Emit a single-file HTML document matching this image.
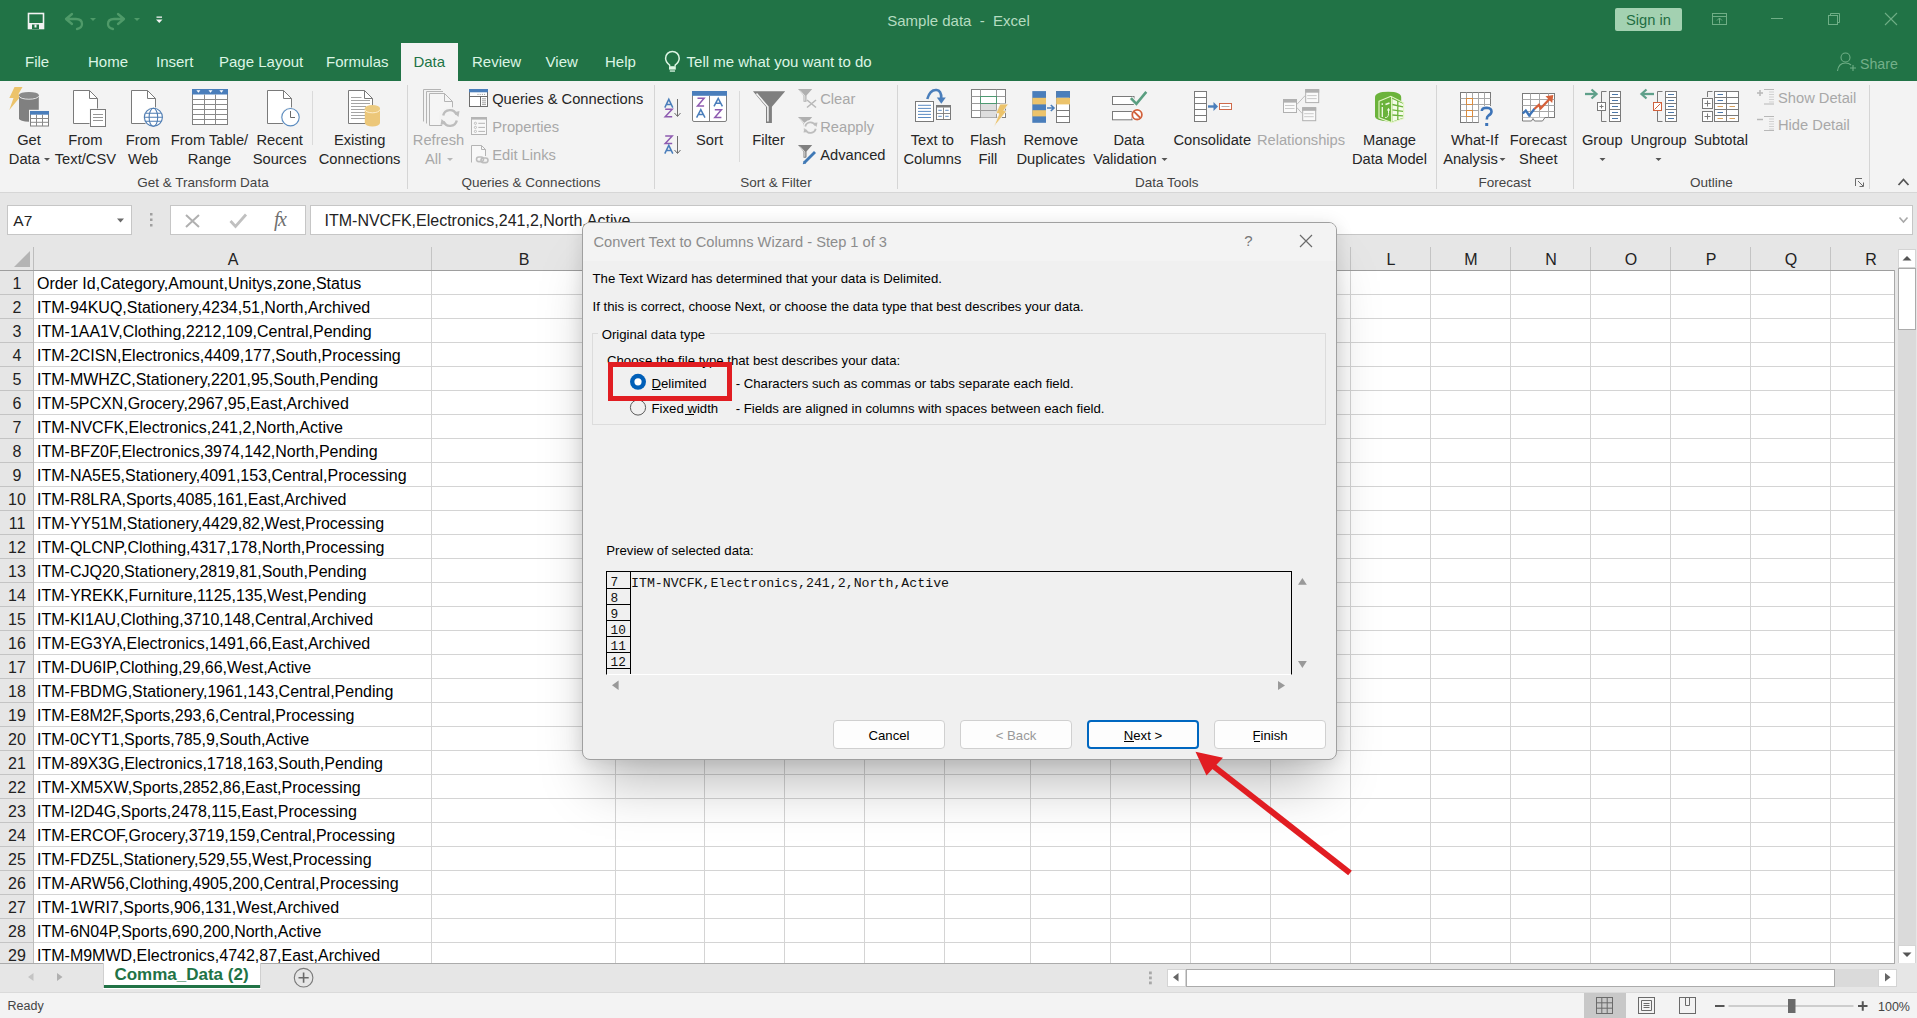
<!DOCTYPE html>
<html><head><meta charset="utf-8"><style>
html,body{margin:0;padding:0;}
body{width:1917px;height:1018px;position:relative;overflow:hidden;background:#ffffff;font-family:"Liberation Sans",sans-serif;}
.t{position:absolute;white-space:pre;line-height:1;}
.r{position:absolute;}
.s{position:absolute;overflow:visible;}
</style></head><body>
<div class="r" style="left:0px;top:0px;width:1917px;height:81px;background:#217346;"></div>
<div class="t" style="left:758.50px;width:400px;text-align:center;top:12.90px;font-size:15px;color:#b5dcc0;">Sample data  -  Excel</div>
<div class="r" style="left:1615px;top:8px;width:67px;height:23px;background:#a3d1b1;border-radius:2px"></div>
<div class="t" style="left:1615.00px;width:67px;text-align:center;top:13.06px;font-size:14.7px;color:#1f6e43;">Sign in</div>
<div class="r" style="left:401px;top:43px;width:57px;height:38px;background:#f3f3f3;"></div>
<div class="t" style="left:25.00px;top:54.30px;font-size:15px;color:#dcf5e4;">File</div>
<div class="t" style="left:88.00px;top:54.30px;font-size:15px;color:#dcf5e4;">Home</div>
<div class="t" style="left:156.00px;top:54.30px;font-size:15px;color:#dcf5e4;">Insert</div>
<div class="t" style="left:219.00px;top:54.30px;font-size:15px;color:#dcf5e4;">Page Layout</div>
<div class="t" style="left:326.00px;top:54.30px;font-size:15px;color:#dcf5e4;">Formulas</div>
<div class="t" style="left:413.40px;top:54.30px;font-size:15px;color:#217346;">Data</div>
<div class="t" style="left:472.00px;top:54.30px;font-size:15px;color:#dcf5e4;">Review</div>
<div class="t" style="left:545.60px;top:54.30px;font-size:15px;color:#dcf5e4;">View</div>
<div class="t" style="left:605.00px;top:54.30px;font-size:15px;color:#dcf5e4;">Help</div>
<div class="t" style="left:686.60px;top:54.30px;font-size:15px;color:#dcf5e4;">Tell me what you want to do</div>
<div class="t" style="left:1860.00px;top:56.68px;font-size:14.2px;color:#74b08a;">Share</div>
<div class="r" style="left:0px;top:81px;width:1917px;height:111px;background:#f3f3f3;"></div>
<div class="r" style="left:0px;top:192px;width:1917px;height:1px;background:#d6d6d6;"></div>
<div class="t" style="left:-51.00px;width:160px;text-align:center;top:132.76px;font-size:14.7px;color:#262626;">Get</div>
<div class="t" style="left:8.80px;top:152.46px;font-size:14.7px;color:#262626;">Data</div>
<div class="t" style="left:5.40px;width:160px;text-align:center;top:132.76px;font-size:14.7px;color:#262626;">From</div><div class="t" style="left:5.40px;width:160px;text-align:center;top:152.46px;font-size:14.7px;color:#262626;">Text/CSV</div>
<div class="t" style="left:63.00px;width:160px;text-align:center;top:132.76px;font-size:14.7px;color:#262626;">From</div><div class="t" style="left:63.00px;width:160px;text-align:center;top:152.46px;font-size:14.7px;color:#262626;">Web</div>
<div class="t" style="left:129.50px;width:160px;text-align:center;top:132.76px;font-size:14.7px;color:#262626;">From Table/</div><div class="t" style="left:129.50px;width:160px;text-align:center;top:152.46px;font-size:14.7px;color:#262626;">Range</div>
<div class="t" style="left:199.70px;width:160px;text-align:center;top:132.76px;font-size:14.7px;color:#262626;">Recent</div><div class="t" style="left:199.70px;width:160px;text-align:center;top:152.46px;font-size:14.7px;color:#262626;">Sources</div>
<div class="t" style="left:279.60px;width:160px;text-align:center;top:132.76px;font-size:14.7px;color:#262626;">Existing</div><div class="t" style="left:279.60px;width:160px;text-align:center;top:152.46px;font-size:14.7px;color:#262626;">Connections</div>
<div class="t" style="left:358.50px;width:160px;text-align:center;top:132.76px;font-size:14.7px;color:#a8a8a8;">Refresh</div>
<div class="t" style="left:425.00px;top:152.46px;font-size:14.7px;color:#a8a8a8;">All</div>
<div class="t" style="left:492.20px;top:91.96px;font-size:14.7px;color:#262626;">Queries &amp; Connections</div>
<div class="t" style="left:492.20px;top:119.76px;font-size:14.7px;color:#a8a8a8;">Properties</div>
<div class="t" style="left:492.20px;top:147.56px;font-size:14.7px;color:#a8a8a8;">Edit Links</div>
<div class="t" style="left:629.50px;width:160px;text-align:center;top:132.76px;font-size:14.7px;color:#262626;">Sort</div>
<div class="t" style="left:688.50px;width:160px;text-align:center;top:132.76px;font-size:14.7px;color:#262626;">Filter</div>
<div class="t" style="left:820.20px;top:92.06px;font-size:14.7px;color:#a8a8a8;">Clear</div>
<div class="t" style="left:820.20px;top:119.96px;font-size:14.7px;color:#a8a8a8;">Reapply</div>
<div class="t" style="left:820.20px;top:147.86px;font-size:14.7px;color:#262626;">Advanced</div>
<div class="t" style="left:852.40px;width:160px;text-align:center;top:132.76px;font-size:14.7px;color:#262626;">Text to</div><div class="t" style="left:852.40px;width:160px;text-align:center;top:152.46px;font-size:14.7px;color:#262626;">Columns</div>
<div class="t" style="left:908.00px;width:160px;text-align:center;top:132.76px;font-size:14.7px;color:#262626;">Flash</div><div class="t" style="left:908.00px;width:160px;text-align:center;top:152.46px;font-size:14.7px;color:#262626;">Fill</div>
<div class="t" style="left:970.80px;width:160px;text-align:center;top:132.76px;font-size:14.7px;color:#262626;">Remove</div><div class="t" style="left:970.80px;width:160px;text-align:center;top:152.46px;font-size:14.7px;color:#262626;">Duplicates</div>
<div class="t" style="left:1049.00px;width:160px;text-align:center;top:132.76px;font-size:14.7px;color:#262626;">Data</div><div class="t" style="left:1049.00px;width:160px;text-align:center;top:152.46px;font-size:14.7px;color:#262626;">Validation  </div>
<div class="t" style="left:1132.30px;width:160px;text-align:center;top:132.76px;font-size:14.7px;color:#262626;">Consolidate</div>
<div class="t" style="left:1221.00px;width:160px;text-align:center;top:132.76px;font-size:14.7px;color:#a8a8a8;">Relationships</div>
<div class="t" style="left:1309.50px;width:160px;text-align:center;top:132.76px;font-size:14.7px;color:#262626;">Manage</div><div class="t" style="left:1309.50px;width:160px;text-align:center;top:152.46px;font-size:14.7px;color:#262626;">Data Model</div>
<div class="t" style="left:1394.60px;width:160px;text-align:center;top:132.76px;font-size:14.7px;color:#262626;">What-If</div><div class="t" style="left:1394.60px;width:160px;text-align:center;top:152.46px;font-size:14.7px;color:#262626;">Analysis  </div>
<div class="t" style="left:1458.30px;width:160px;text-align:center;top:132.76px;font-size:14.7px;color:#262626;">Forecast</div><div class="t" style="left:1458.30px;width:160px;text-align:center;top:152.46px;font-size:14.7px;color:#262626;">Sheet</div>
<div class="t" style="left:1522.30px;width:160px;text-align:center;top:132.76px;font-size:14.7px;color:#262626;">Group</div>
<div class="t" style="left:1578.60px;width:160px;text-align:center;top:132.76px;font-size:14.7px;color:#262626;">Ungroup</div>
<div class="t" style="left:1641.00px;width:160px;text-align:center;top:132.76px;font-size:14.7px;color:#262626;">Subtotal</div>
<div class="t" style="left:1778.00px;top:90.76px;font-size:14.7px;color:#a8a8a8;">Show Detail</div>
<div class="t" style="left:1778.00px;top:117.66px;font-size:14.7px;color:#a8a8a8;">Hide Detail</div>
<div class="t" style="left:103.00px;width:200px;text-align:center;top:175.77px;font-size:13.5px;color:#444444;">Get &amp; Transform Data</div>
<div class="t" style="left:431.00px;width:200px;text-align:center;top:175.77px;font-size:13.5px;color:#444444;">Queries &amp; Connections</div>
<div class="t" style="left:676.00px;width:200px;text-align:center;top:175.77px;font-size:13.5px;color:#444444;">Sort &amp; Filter</div>
<div class="t" style="left:1066.80px;width:200px;text-align:center;top:175.77px;font-size:13.5px;color:#444444;">Data Tools</div>
<div class="t" style="left:1404.70px;width:200px;text-align:center;top:175.77px;font-size:13.5px;color:#444444;">Forecast</div>
<div class="t" style="left:1611.30px;width:200px;text-align:center;top:175.77px;font-size:13.5px;color:#444444;">Outline</div>
<div class="r" style="left:407px;top:85px;width:1px;height:104px;background:#d5d5d5;"></div>
<div class="r" style="left:654px;top:85px;width:1px;height:104px;background:#d5d5d5;"></div>
<div class="r" style="left:897px;top:85px;width:1px;height:104px;background:#d5d5d5;"></div>
<div class="r" style="left:1436px;top:85px;width:1px;height:104px;background:#d5d5d5;"></div>
<div class="r" style="left:1573px;top:85px;width:1px;height:104px;background:#d5d5d5;"></div>
<div class="r" style="left:1869px;top:85px;width:1px;height:104px;background:#d5d5d5;"></div>
<div class="r" style="left:312px;top:91px;width:1px;height:54px;background:#dadada;"></div>
<div class="r" style="left:739px;top:91px;width:1px;height:71px;background:#dadada;"></div>
<div class="r" style="left:0px;top:193px;width:1917px;height:54px;background:#e6e6e6;"></div>
<div class="r" style="left:7px;top:205px;width:125px;height:30px;background:#ffffff;box-sizing:border-box;border:1px solid #c6c6c6"></div>
<div class="t" style="left:13.30px;top:213.38px;font-size:15.5px;color:#222;">A7</div>
<div class="r" style="left:170px;top:205px;width:136px;height:30px;background:#ffffff;box-sizing:border-box;border:1px solid #c6c6c6"></div>
<div class="r" style="left:310px;top:205px;width:1603px;height:30px;background:#ffffff;box-sizing:border-box;border:1px solid #c6c6c6"></div>
<div class="t" style="left:324.50px;top:213.16px;font-size:16px;color:#222;">ITM-NVCFK,Electronics,241,2,North,Active</div>
<svg class="s" style="left:0;top:0" width="1917" height="260" viewBox="0 0 1917 260"><rect x="28.5" y="13.5" width="15" height="15" fill="none" stroke="#f2f2f2" stroke-width="1.6"/>
<rect x="29" y="23" width="14" height="6" fill="#f2f2f2"/>
<rect x="32" y="24.5" width="7" height="4.5" fill="#217346"/><rect x="34.5" y="24.5" width="2" height="3" fill="#f2f2f2"/>
<path d="M66,19 L72,14 M66,19 L72,24 M66,19 L76,19 Q82,19 82,24 Q82,28 77,29" fill="none" stroke="#4f9a69" stroke-width="2.3" stroke-linecap="round" stroke-linejoin="round"/>
<polygon points="90,18 96,18 93,21" fill="#4f9a69"/>
<path d="M124,19 L118,14 M124,19 L118,24 M124,19 L114,19 Q108,19 108,24 Q108,28 113,29" fill="none" stroke="#4f9a69" stroke-width="2.3" stroke-linecap="round" stroke-linejoin="round"/>
<polygon points="134,18 140,18 137,21" fill="#4f9a69"/>
<rect x="156.5" y="16.5" width="5.5" height="1.3" fill="#f2f2f2"/><polygon points="156,19.5 162.5,19.5 159.25,23" fill="#f2f2f2"/>
<rect x="1712.5" y="13.5" width="14" height="11" fill="none" stroke="#6fae86" stroke-width="1"/><path d="M1713,16.5 H1726 M1719.5,23.5 V18 M1717,20.5 L1719.5,18 L1722,20.5" fill="none" stroke="#6fae86" stroke-width="1"/>
<rect x="1771" y="18" width="12" height="1" fill="#6fae86"/>
<rect x="1828.5" y="15.5" width="9" height="9" fill="none" stroke="#6fae86"/><path d="M1830.5,15.5 V13.5 H1839.5 V22.5 H1837.5" fill="none" stroke="#6fae86"/>
<path d="M1885,13 L1897,25 M1897,13 L1885,25" stroke="#6fae86" stroke-width="1.1"/>
<circle cx="1845.5" cy="57.5" r="4.5" fill="none" stroke="#6fae86" stroke-width="1.1"/><path d="M1837.5,71 Q1838.5,63 1845.5,63 Q1849,63 1851,65" fill="none" stroke="#6fae86" stroke-width="1.1"/><path d="M1850,68 H1856 M1853,65 V71" stroke="#6fae86" stroke-width="1.1"/>
<g transform="translate(0,1.2)"><path d="M669.6,65 V63.8 Q665.6,60.8 665.6,57 A6.8,6.8 0 0 1 679.2,57 Q679.2,60.8 675.2,63.8 V65" fill="none" stroke="#dcf5e4" stroke-width="1.5"/><rect x="669" y="65" width="6.8" height="3.4" fill="#dcf5e4"/><rect x="669.8" y="69.2" width="5.2" height="1.3" fill="#dcf5e4"/></g>
<polygon points="14.5,87 22.5,87 18.3,94.3 21.3,95.5 9.3,110 13.5,98 9.3,98" fill="#ecc36b"/>
<path d="M19,95 V118.5 A9.9,3.2 0 0 0 38.8,118.5 V95 Z" fill="#808080"/><ellipse cx="28.9" cy="95" rx="9.9" ry="3.1" fill="#8a8a8a"/><path d="M19.3,96.2 A9.6,3 0 0 0 38.5,96.2" fill="none" stroke="#f3f3f3" stroke-width="0.9"/>
<rect x="29" y="109.8" width="21" height="17.8" fill="#f3f3f3"/>
<rect x="30.5" y="111.5" width="18" height="14.5" fill="#fff" stroke="#7f7f7f" stroke-width="1"/><rect x="30" y="111" width="19" height="3.7" fill="#4a7ebb"/>
<path d="M36.5,114.5 V126 M42.5,114.5 V126 M30.5,118.5 H48.5 M30.5,122.3 H48.5" stroke="#8a8a8a" stroke-width="1"/>
<path d="M73.5,90.5 H89.5 L97.5,98.5 V123.5 H73.5 Z" fill="#fff" stroke="#7a7a7a"/><path d="M89.5,90.5 V98.5 H97.5" fill="none" stroke="#7a7a7a"/>
<rect x="89.5" y="108.5" width="17" height="18.5" fill="#f3f3f3"/><rect x="90.5" y="109.5" width="15" height="17" fill="#fff" stroke="#7a7a7a"/>
<path d="M93,114.5 H103 M93,117.5 H103 M93,120.5 H103" stroke="#8a8a8a" stroke-width="0.9"/>
<path d="M131.5,90.5 H147.5 L155.5,98.5 V123.5 H131.5 Z" fill="#fff" stroke="#7a7a7a"/><path d="M147.5,90.5 V98.5 H155.5" fill="none" stroke="#7a7a7a"/>
<circle cx="153.4" cy="117.3" r="10.3" fill="#f3f3f3"/><circle cx="153.4" cy="117.3" r="9" fill="#fff" stroke="#4f7db3" stroke-width="1.1"/><ellipse cx="153.4" cy="117.3" rx="4.3" ry="9" fill="none" stroke="#4f7db3" stroke-width="1.1"/><path d="M144.4,117.3 H162.4 M146,113.3 H160.8 M146,121.3 H160.8" stroke="#4f7db3" stroke-width="1.1"/>
<rect x="192.5" y="89.5" width="35" height="35" fill="#fff" stroke="#7f7f7f"/><rect x="192" y="89" width="36" height="5.5" fill="#4a7ebb"/>
<polygon points="196.4,90.3 200.4,90.3 198.4,92.8" fill="#fff"/><polygon points="208.5,90.3 212.5,90.3 210.5,92.8" fill="#fff"/><polygon points="219.4,90.3 223.4,90.3 221.4,92.8" fill="#fff"/>
<path d="M204.5,94.5 V124.5 M215.5,94.5 V124.5 M192.5,99.5 H227.5 M192.5,104.5 H227.5 M192.5,109.5 H227.5 M192.5,114.5 H227.5 M192.5,119.5 H227.5" stroke="#8a8a8a" stroke-width="1"/>
<path d="M267.5,90.5 H283.5 L291.5,98.5 V123.5 H267.5 Z" fill="#fff" stroke="#7a7a7a"/><path d="M283.5,90.5 V98.5 H291.5" fill="none" stroke="#7a7a7a"/>
<circle cx="290.5" cy="117.2" r="10" fill="#f3f3f3"/><circle cx="290.5" cy="117.2" r="8.7" fill="#fff" stroke="#5b8cc0" stroke-width="1.1"/><path d="M290.5,111 V117.5 H295" fill="none" stroke="#6a6a6a" stroke-width="1"/>
<path d="M348.5,90.5 H364.5 L372.5,98.5 V123.5 H348.5 Z" fill="#fff" stroke="#7a7a7a"/><path d="M364.5,90.5 V98.5 H372.5" fill="none" stroke="#7a7a7a"/>
<path d="M351,97.5 H361.5 M351,100.5 H370 M351,103.5 H370 M351,106.5 H366 M351,109.5 H366 M351,112.5 H366 M351,115.5 H366 M351,118.5 H366" stroke="#9a9a9a" stroke-width="0.9"/>
<path d="M364.8,108.4 V123 A7.6,3.4 0 0 0 380,123 V108.4 Z" fill="#ecc779"/><ellipse cx="372.4" cy="108.4" rx="7.6" ry="3.3" fill="#eccb80"/><path d="M365,109.6 A7.4,3.2 0 0 0 379.8,109.6" fill="none" stroke="#fff3d6" stroke-width="0.9"/>
<path d="M423.5,121.5 V89.5 H441" fill="none" stroke="#b4b4b4"/><path d="M426.5,123.5 V91.5 H443" fill="none" stroke="#b4b4b4"/>
<path d="M429.5,125.5 V93.5 H444.5 L452.5,101.5 V125.5 Z" fill="#f5f5f5" stroke="#b4b4b4"/><path d="M444.5,93.5 V101.5 H452.5" fill="none" stroke="#b4b4b4"/>
<circle cx="450" cy="118" r="11" fill="#f3f3f3"/>
<path d="M443.2,115.5 A7,7 0 0 1 456.5,114.5 M456.8,120.5 A7,7 0 0 1 443.5,121.5" fill="none" stroke="#bdbdbd" stroke-width="2.4"/><polygon points="453.5,112.5 459.5,111 458.5,117" fill="#bdbdbd"/><polygon points="446.5,123.5 440.5,125 441.5,119" fill="#bdbdbd"/>
<rect x="469.5" y="89.5" width="18" height="17" fill="#fff" stroke="#6d6d6d"/><rect x="469" y="89" width="19" height="3.3" fill="#4a7ebb"/>
<path d="M469.5,96.5 H487.5 M480.5,96.5 V106.5" stroke="#6d6d6d" stroke-width="1"/><path d="M482,98.8 H486 M482,100.8 H486 M482,102.8 H486 M482,104.6 H486" stroke="#8a8a8a" stroke-width="0.8"/>
<path d="M477.5,94.4 H486" stroke="#8a8a8a" stroke-width="0.9" stroke-dasharray="1 1.2"/>
<rect x="471.5" y="117.5" width="15" height="17" fill="#f8f8f8" stroke="#b4b4b4"/><rect x="471" y="117" width="16" height="2.6" fill="#b4b4b4"/>
<circle cx="475.4" cy="123.3" r="1.1" fill="none" stroke="#b4b4b4" stroke-width="0.8"/><circle cx="475.4" cy="127.4" r="1.1" fill="none" stroke="#b4b4b4" stroke-width="0.8"/><circle cx="475.4" cy="131.4" r="1.1" fill="none" stroke="#b4b4b4" stroke-width="0.8"/><path d="M478.3,123.3 H485 M478.3,127.4 H485 M478.3,131.4 H485" stroke="#b4b4b4" stroke-width="1"/>
<path d="M471.5,162.5 V145.5 H481.5 L485.5,149.5 V156" fill="#f8f8f8" stroke="#b4b4b4"/><path d="M481.5,145.5 V149.5 H485.5" fill="none" stroke="#b4b4b4"/>
<rect x="476.5" y="157" width="7" height="4.6" rx="2.3" fill="none" stroke="#bdbdbd" stroke-width="1.6"/><rect x="481" y="158" width="7" height="4.6" rx="2.3" fill="none" stroke="#bdbdbd" stroke-width="1.6"/>
<path d="M664.8,107.6 L668.8,99.3 L672.8,107.6 M666.4,104.446 H671.1999999999999" fill="none" stroke="#4a7ebb" stroke-width="1.5"/>
<path d="M665.2,109.2 H672.2 L665.2,116.7 H672.2" fill="none" stroke="#8e5bb0" stroke-width="1.5"/>
<path d="M677.5,99 V116 M674.5,113 L677.5,116.5 L680.5,113" fill="none" stroke="#6d6d6d" stroke-width="1"/>
<path d="M665.2,136 H672.2 L665.2,143.5 H672.2" fill="none" stroke="#8e5bb0" stroke-width="1.5"/>
<path d="M664.8,153.60000000000002 L668.8,145.3 L672.8,153.60000000000002 M666.4,150.44600000000003 H671.1999999999999" fill="none" stroke="#4a7ebb" stroke-width="1.5"/>
<path d="M677.5,136 V153 M674.5,150 L677.5,153.5 L680.5,150" fill="none" stroke="#6d6d6d" stroke-width="1"/>
<rect x="692.5" y="91.5" width="34" height="30" rx="1.5" fill="#fff" stroke="#7f7f7f"/><rect x="692" y="91" width="35" height="4.8" fill="#4a7ebb"/><path d="M709.5,95.8 V121.5" stroke="#7f7f7f"/>
<path d="M697.5,98.3 H704.1 L697.5,106.1 H704.1" fill="none" stroke="#8e5bb0" stroke-width="1.5"/>
<path d="M696.6,117.6 L700.8000000000001,109.6 L705.0,117.6 M698.28,114.55999999999999 H703.32" fill="none" stroke="#4a7ebb" stroke-width="1.5"/>
<path d="M714,106.3 L718.2,98.3 L722.4,106.3 M715.68,103.25999999999999 H720.72" fill="none" stroke="#4a7ebb" stroke-width="1.5"/>
<path d="M714.8,109.8 H721.4 L714.8,117.6 H721.4" fill="none" stroke="#8e5bb0" stroke-width="1.5"/>
<polygon points="753,91.2 785.2,91.2 771.9,106.8 771.9,122.9 766,122.9 766,106.8" fill="#7f7f7f"/><path d="M756.5,93.5 L767.9,106.8 V121.5" fill="none" stroke="#f3f3f3" stroke-width="1.6"/>
<polygon points="798,89 812.2,89 806.5,95.5 806.5,101.8 803.5,101.8 803.5,95.5" fill="#b0b0b0"/><path d="M799.8,90.4 L804.8,95.8 V100.8" fill="none" stroke="#f3f3f3" stroke-width="0.8"/><path d="M807,100 L816,107.5 M816,100 L807,107.5" stroke="#b8b8b8" stroke-width="1.6"/>
<polygon points="798,117 812.2,117 806.5,123.5 806.5,129.8 803.5,129.8 803.5,123.5" fill="#b0b0b0"/><path d="M799.8,118.4 L804.8,123.8 V128.8" fill="none" stroke="#f3f3f3" stroke-width="0.8"/>
<circle cx="810.5" cy="127.5" r="7.5" fill="#f3f3f3"/><path d="M805.3,126.5 A5.3,5.3 0 0 1 815.3,125.5 M815.7,128.8 A5.3,5.3 0 0 1 805.7,129.8" fill="none" stroke="#bdbdbd" stroke-width="1.8"/><polygon points="813,123 817.5,122.5 816.5,127" fill="#bdbdbd"/><polygon points="808,132 803.5,132.5 804.5,128" fill="#bdbdbd"/>
<polygon points="798,145 812.2,145 806.5,151.5 806.5,157.8 803.5,157.8 803.5,151.5" fill="#7f7f7f"/><path d="M799.8,146.4 L804.8,151.8 V156.8" fill="none" stroke="#f3f3f3" stroke-width="0.8"/>
<path d="M804.5,162.5 L815,152" stroke="#f3f3f3" stroke-width="4.5"/><path d="M804.5,162.5 L815,152" stroke="#3f78b5" stroke-width="2.8"/><polygon points="802.8,164.2 803.6,160.8 806.2,163.4" fill="#3f78b5"/>
<rect x="915.5" y="101.5" width="18" height="20" fill="#fff" stroke="#7a7a7a"/><path d="M918,105.3 H931 M918,108.4 H931 M918,111.4 H931 M918,114.4 H931 M918,117.5 H931" stroke="#4a7ebb" stroke-width="0.9"/>
<rect x="936.5" y="105.5" width="14" height="14" fill="#fff" stroke="#7a7a7a"/><rect x="936" y="105" width="15" height="2.5" fill="#7a7a7a"/><path d="M943.5,107.5 V119.5 M936.5,113.5 H950.5" stroke="#7a7a7a" stroke-width="0.9"/><path d="M938.3,110.3 H941.8 M945.2,110.3 H948.7 M938.3,116.3 H941.8 M945.2,116.3 H948.7" stroke="#4a7ebb" stroke-width="0.9"/>
<path d="M927.3,99 Q930,89.5 936.5,90 Q941.5,90.5 941.3,98.5" fill="none" stroke="#4a7ebb" stroke-width="2.6"/><polygon points="936.8,97.5 945.8,97.5 941.3,103.8" fill="#4a7ebb"/>
<rect x="971.5" y="89.5" width="34" height="28" fill="#fff" stroke="#7f7f7f"/><rect x="981" y="103.5" width="15.5" height="14" fill="#dedede"/>
<path d="M980.5,89.5 V117.5 M996.5,89.5 V117.5 M971.5,96.5 H1005.5 M971.5,103.5 H1005.5 M971.5,110.5 H1005.5" stroke="#9a9a9a" stroke-width="1"/><rect x="980.5" y="96.5" width="16" height="7" fill="#fff" stroke="#4e9a72" stroke-width="1"/>
<polygon points="1000,104 1008.5,104 1003.8,110.5 1006.5,111.2 993.8,127 999,113.8 996,113.2" fill="#ecc36b" stroke="#f3f3f3" stroke-width="0.8"/>
<rect x="1032.3" y="91.1" width="13.7" height="31.7" fill="#4a7ebb"/><rect x="1032.3" y="97.8" width="13.7" height="6.6" fill="#ecc36b"/><rect x="1032.3" y="110.2" width="13.7" height="6.2" fill="#ecc36b"/>
<rect x="1056.5" y="91.5" width="13" height="31" fill="#fff" stroke="#7a7a7a"/><rect x="1056.2" y="91.1" width="13.8" height="6.7" fill="#4a7ebb"/><rect x="1056.2" y="97.8" width="13.8" height="6.6" fill="#ecc36b"/><path d="M1056.5,110.5 H1069.5 M1056.5,116.5 H1069.5" stroke="#7a7a7a"/>
<path d="M1047,108 H1053.5 M1050.8,105 L1054,108 L1050.8,111" fill="none" stroke="#4a7ebb" stroke-width="1.6"/>
<rect x="1112.5" y="96.5" width="21.5" height="8" fill="#fff" stroke="#7a7a7a"/><rect x="1112.5" y="111.5" width="19.5" height="8.3" fill="#fff" stroke="#7a7a7a"/>
<path d="M1130.9,98.2 L1136.4,103.8 L1146.3,91.8" fill="none" stroke="#f3f3f3" stroke-width="4.5"/><path d="M1130.9,98.2 L1136.4,103.8 L1146.3,91.8" fill="none" stroke="#5a9e80" stroke-width="2.6"/>
<circle cx="1137.1" cy="114.7" r="6.2" fill="#fff"/><circle cx="1137.1" cy="114.7" r="4.8" fill="none" stroke="#d0613c" stroke-width="1.8"/><path d="M1133.8,111.4 L1140.4,118" stroke="#d0613c" stroke-width="1.8"/>
<rect x="1194.5" y="91.5" width="12" height="30" fill="#fff" stroke="#7a7a7a"/><path d="M1194.5,97.5 H1206.5 M1194.5,103.5 H1206.5 M1194.5,109.5 H1206.5 M1194.5,115.5 H1206.5" stroke="#7a7a7a"/>
<path d="M1208,106.5 H1215" stroke="#4a7ebb" stroke-width="2.4"/><polygon points="1213.5,101.9 1218,106.5 1213.5,111" fill="#4a7ebb"/>
<rect x="1219.5" y="103.5" width="12" height="6" fill="#fff" stroke="#cf6a4a"/><path d="M1221.5,106.5 H1229.5" stroke="#9a9a9a" stroke-width="0.8"/>
<rect x="1283.5" y="99.5" width="13" height="13" fill="#fafafa" stroke="#b0b0b0"/><rect x="1283" y="99" width="14" height="3.6" fill="#b0b0b0"/><path d="M1285,105.5 H1294.5 M1285,108.5 H1294.5" stroke="#c4c4c4" stroke-width="0.9"/>
<rect x="1305.7" y="89.6" width="13" height="13" fill="#fafafa" stroke="#b0b0b0"/><rect x="1305.2" y="89.1" width="14" height="3.6" fill="#b0b0b0"/><path d="M1307.2,95.6 H1316.7 M1307.2,98.6 H1316.7" stroke="#c4c4c4" stroke-width="0.9"/>
<rect x="1302.7" y="107.7" width="13" height="13" fill="#fafafa" stroke="#b0b0b0"/><rect x="1302.2" y="107.2" width="14" height="3.6" fill="#b0b0b0"/><path d="M1304.2,113.7 H1313.7 M1304.2,116.7 H1313.7" stroke="#c4c4c4" stroke-width="0.9"/>
<path d="M1296.8,104.5 L1305.2,95.5 M1296.8,107.5 L1302.2,113.5" stroke="#b8b8b8" stroke-width="0.9"/>
<path d="M1375,97.5 Q1375,91.8 1388.2,91.8 Q1401.2,91.8 1401.2,97.5 V116.5 Q1401.2,120.5 1388.2,121.5 Q1375,120.5 1375,116.5 Z" fill="#6bb33b"/>
<polygon points="1379,101.2 1390.8,96.3 1403.6,102.8 1403.6,118.6 1391.6,122.6 1379,117.8" fill="#6bb33b" stroke="#e6f6c9" stroke-width="1.1"/>
<polygon points="1392.3,99 1403,103.8 1403,117.8 1392.3,121.5" fill="#f4fbe8"/>
<path d="M1392.3,104.5 L1403,106.8 M1392.3,109.8 L1403,111.4 M1392.3,115 L1403,115.8 M1397.8,101 V120" stroke="#6bb33b" stroke-width="1.3"/>
<path d="M1391.6,97 V122.5" stroke="#e6f6c9" stroke-width="1.1"/>
<path d="M1382.3,107 V117" stroke="#f4fbe8" stroke-width="1.3"/><rect x="1381.6" y="103.3" width="1.4" height="1.6" fill="#f4fbe8"/><path d="M1385.5,104.5 L1389.5,103" stroke="#f4fbe8" stroke-width="1.4"/>
<path d="M1385.2,117.5 Q1388.5,117.8 1388.5,113.5 V109.5" fill="none" stroke="#f4fbe8" stroke-width="1"/><polygon points="1386.8,110.5 1390.2,110.5 1388.5,107.8" fill="#f4fbe8"/>
<rect x="1460.5" y="92.5" width="30" height="30" fill="#fff" stroke="#7a7a7a"/><path d="M1466.5,92.5 V122.5 M1472.5,92.5 V122.5 M1478.5,92.5 V122.5 M1484.5,92.5 V122.5 M1460.5,98.5 H1490.5 M1460.5,104.5 H1490.5 M1460.5,110.5 H1490.5 M1460.5,116.5 H1490.5" stroke="#a8a8a8" stroke-width="1"/>
<rect x="1466.5" y="98.5" width="6" height="6" fill="#fff" stroke="#d98b3e"/><rect x="1466.5" y="110.5" width="6" height="6" fill="#fff" stroke="#d98b3e"/>
<rect x="1479" y="106" width="15.5" height="22" fill="#f3f3f3"/><path d="M1481.8,111 Q1482,107.8 1486.8,107.8 Q1491.5,108 1491.5,111.5 Q1491.5,114 1488.5,115.5 Q1486.8,116.5 1486.8,119.5" fill="none" stroke="#3d74b8" stroke-width="2.6"/><rect x="1485.2" y="123" width="3" height="3" fill="#3d74b8"/>
<rect x="1522.5" y="93.5" width="32" height="24" fill="#fff" stroke="#7a7a7a"/><path d="M1530.5,93.5 V117.5 M1539.5,93.5 V117.5 M1548.5,93.5 V117.5 M1522.5,99.5 H1554.5 M1522.5,105.5 H1554.5 M1522.5,111.5 H1554.5" stroke="#a8a8a8" stroke-width="1"/>
<path d="M1522.5,117.5 V121 H1531.5 L1533,118.5 L1534.5,121 H1542.5 L1545,117.5" fill="#fff" stroke="#7a7a7a" stroke-width="1"/>
<path d="M1522.8,113.5 L1525.8,110.5 L1529.2,115.5 L1534.5,108.8" fill="none" stroke="#3d74b8" stroke-width="2.3"/><path d="M1534.3,109 L1538.9,104.9 L1540.7,108.3 L1551,97.5" fill="none" stroke="#d5613a" stroke-width="2.3"/><polygon points="1553.3,95 1545.5,96.2 1552.2,103" fill="#d5613a"/>
<rect x="1609.5" y="91.5" width="11" height="30" fill="#fff" stroke="#7a7a7a"/><path d="M1609.5,97.5 H1620.5 M1609.5,103.5 H1620.5 M1609.5,109.5 H1620.5 M1609.5,115.5 H1620.5" stroke="#7a7a7a"/><path d="M1612,94.5 H1618" stroke="#4b77a8" stroke-width="1"/><path d="M1612,100.5 H1618" stroke="#4b77a8" stroke-width="1"/><path d="M1612,106.5 H1618" stroke="#4b77a8" stroke-width="1"/><path d="M1612,112.5 H1618" stroke="#4b77a8" stroke-width="1"/><path d="M1612,118.5 H1618" stroke="#4b77a8" stroke-width="1"/>
<rect x="1665.5" y="91.5" width="11" height="30" fill="#fff" stroke="#7a7a7a"/><path d="M1665.5,97.5 H1676.5 M1665.5,103.5 H1676.5 M1665.5,109.5 H1676.5 M1665.5,115.5 H1676.5" stroke="#7a7a7a"/><path d="M1668,94.5 H1674" stroke="#4b77a8" stroke-width="1"/><path d="M1668,100.5 H1674" stroke="#4b77a8" stroke-width="1"/><path d="M1668,106.5 H1674" stroke="#4b77a8" stroke-width="1"/><path d="M1668,112.5 H1674" stroke="#4b77a8" stroke-width="1"/><path d="M1668,118.5 H1674" stroke="#4b77a8" stroke-width="1"/>
<path d="M1606.5,91.5 H1601.5 V121.5 H1606.5" fill="none" stroke="#7a7a7a"/><rect x="1597.5" y="102.5" width="8" height="8" fill="#fff" stroke="#7a7a7a"/><path d="M1599.5,106.5 H1603.5 M1601.5,104.5 V108.5" stroke="#7a7a7a"/>
<path d="M1585,94 H1596" stroke="#5fa08a" stroke-width="2.3"/><path d="M1591.5,89.5 L1596.5,94 L1591.5,98.5" fill="none" stroke="#5fa08a" stroke-width="2.3"/>
<path d="M1662.5,91.5 H1657.5 V121.5 H1662.5" fill="none" stroke="#7a7a7a"/><rect x="1653.5" y="102.5" width="8" height="8" fill="#fff" stroke="#d0613c"/><path d="M1654.5,109.5 L1660.5,103.5" stroke="#d0613c"/>
<path d="M1642,94 H1654" stroke="#5fa08a" stroke-width="2.3"/><path d="M1646.5,89.5 L1641.5,94 L1646.5,98.5" fill="none" stroke="#5fa08a" stroke-width="2.3"/>
<path d="M1712.5,91.5 H1707.5 V97" fill="none" stroke="#7a7a7a"/><rect x="1702.5" y="98.5" width="10" height="10" fill="#fff" stroke="#7a7a7a"/><rect x="1702.5" y="111.5" width="10" height="10" fill="#fff" stroke="#7a7a7a"/><path d="M1704.5,103.5 H1710.5 M1707.5,100.5 V106.5 M1704.5,116.5 H1710.5 M1707.5,113.5 V119.5" stroke="#7a7a7a"/>
<rect x="1714.5" y="91.5" width="24" height="30" fill="#fff" stroke="#7a7a7a"/><path d="M1726.5,91.5 V121.5 M1714.5,97.5 H1738.5 M1714.5,103.5 H1738.5 M1714.5,109.5 H1738.5 M1714.5,115.5 H1738.5" stroke="#7a7a7a"/>
<path d="M1717.5,94.5 H1723 M1717.5,100.5 H1723 M1717.5,112.5 H1723" stroke="#4b77a8"/><path d="M1717.5,106.5 H1723 M1729.5,106.5 H1735 M1717.5,118.5 H1723 M1729.5,118.5 H1735" stroke="#d9a05a"/>
<path d="M1757,93 H1763 M1760,90 V96" stroke="#b8b8b8" stroke-width="1.5"/><path d="M1764,89.5 H1774 M1764,104 H1774" stroke="#b8b8b8" stroke-width="1.2"/><path d="M1769,92 H1774 M1769,94.5 H1774 M1769,97 H1774 M1769,99.5 H1774 M1769,102 H1774" stroke="#c8c8c8" stroke-width="0.8"/>
<path d="M1757,119.5 H1763" stroke="#b8b8b8" stroke-width="1.5"/><path d="M1764,116.5 H1774 M1764,130.5 H1774" stroke="#b8b8b8" stroke-width="1.2"/><path d="M1769,119 H1774 M1769,121.5 H1774 M1769,124 H1774 M1769,126.5 H1774 M1769,129 H1774" stroke="#c8c8c8" stroke-width="0.8"/>
<path d="M1855.5,186 V178.5 H1862" fill="none" stroke="#6a6a6a"/><path d="M1858,181 L1863,186 M1863.5,182.5 V186.5 H1859.5" fill="none" stroke="#6a6a6a"/>
<path d="M1898.5,185 L1903.5,179.5 L1908.5,185" fill="none" stroke="#555" stroke-width="1.8"/>
<polygon points="44,158.0 50,158.0 47,161.0" fill="#555"/>
<polygon points="447,158.0 453,158.0 450,161.0" fill="#b8b8b8"/>
<polygon points="1161.5,158.0 1167.5,158.0 1164.5,161.0" fill="#555"/>
<polygon points="1499.5,158.0 1505.5,158.0 1502.5,161.0" fill="#555"/>
<polygon points="1599.5,158.0 1605.5,158.0 1602.5,161.0" fill="#555"/>
<polygon points="1655.5,158.0 1661.5,158.0 1658.5,161.0" fill="#555"/>
<polygon points="117,218.5 124,218.5 120.5,222.5" fill="#6a6a6a"/>
<rect x="150" y="213" width="2.5" height="2.5" fill="#a0a0a0"/><rect x="150" y="218.5" width="2.5" height="2.5" fill="#a0a0a0"/><rect x="150" y="224" width="2.5" height="2.5" fill="#a0a0a0"/>
<path d="M186,215 L199,227 M199,215 L186,227" stroke="#b0b0b0" stroke-width="2"/>
<path d="M230.5,221 L235.5,226.5 L246,214.5" fill="none" stroke="#c0c0c0" stroke-width="2.8"/>
<path d="M1899.5,217.5 L1903.5,222 L1907.5,217.5" fill="none" stroke="#a8a8a8" stroke-width="1.6"/></svg>
<div class="t" style="left:274.00px;top:209.27px;font-size:20px;color:#707070;font-family:'Liberation Serif',serif;font-style:italic;letter-spacing:-1.5px">fx</div>
<div class="r" style="left:0px;top:247px;width:1898px;height:23px;background:#e6e6e6;"></div>
<div class="r" style="left:0px;top:270px;width:33px;height:693px;background:#e6e6e6;"></div>
<div class="r" style="left:33px;top:270px;width:1861px;height:693px;background:#ffffff;"></div>
<div class="r" style="left:431px;top:271px;width:1px;height:692px;background:#d4d4d4;"></div>
<div class="r" style="left:431px;top:247px;width:1px;height:23px;background:#c4c4c4;"></div>
<div class="t" style="left:193.00px;width:80px;text-align:center;top:251.96px;font-size:16px;color:#222;">A</div>
<div class="r" style="left:615px;top:271px;width:1px;height:692px;background:#d4d4d4;"></div>
<div class="r" style="left:615px;top:247px;width:1px;height:23px;background:#c4c4c4;"></div>
<div class="t" style="left:484.00px;width:80px;text-align:center;top:251.96px;font-size:16px;color:#222;">B</div>
<div class="r" style="left:704px;top:271px;width:1px;height:692px;background:#d4d4d4;"></div>
<div class="r" style="left:704px;top:247px;width:1px;height:23px;background:#c4c4c4;"></div>
<div class="t" style="left:620.50px;width:80px;text-align:center;top:251.96px;font-size:16px;color:#222;">C</div>
<div class="r" style="left:784px;top:271px;width:1px;height:692px;background:#d4d4d4;"></div>
<div class="r" style="left:784px;top:247px;width:1px;height:23px;background:#c4c4c4;"></div>
<div class="t" style="left:705.00px;width:80px;text-align:center;top:251.96px;font-size:16px;color:#222;">D</div>
<div class="r" style="left:864px;top:271px;width:1px;height:692px;background:#d4d4d4;"></div>
<div class="r" style="left:864px;top:247px;width:1px;height:23px;background:#c4c4c4;"></div>
<div class="t" style="left:785.00px;width:80px;text-align:center;top:251.96px;font-size:16px;color:#222;">E</div>
<div class="r" style="left:944px;top:271px;width:1px;height:692px;background:#d4d4d4;"></div>
<div class="r" style="left:944px;top:247px;width:1px;height:23px;background:#c4c4c4;"></div>
<div class="t" style="left:865.00px;width:80px;text-align:center;top:251.96px;font-size:16px;color:#222;">F</div>
<div class="r" style="left:1030px;top:271px;width:1px;height:692px;background:#d4d4d4;"></div>
<div class="r" style="left:1030px;top:247px;width:1px;height:23px;background:#c4c4c4;"></div>
<div class="t" style="left:948.00px;width:80px;text-align:center;top:251.96px;font-size:16px;color:#222;">G</div>
<div class="r" style="left:1110px;top:271px;width:1px;height:692px;background:#d4d4d4;"></div>
<div class="r" style="left:1110px;top:247px;width:1px;height:23px;background:#c4c4c4;"></div>
<div class="t" style="left:1031.00px;width:80px;text-align:center;top:251.96px;font-size:16px;color:#222;">H</div>
<div class="r" style="left:1190px;top:271px;width:1px;height:692px;background:#d4d4d4;"></div>
<div class="r" style="left:1190px;top:247px;width:1px;height:23px;background:#c4c4c4;"></div>
<div class="t" style="left:1111.00px;width:80px;text-align:center;top:251.96px;font-size:16px;color:#222;">I</div>
<div class="r" style="left:1270px;top:271px;width:1px;height:692px;background:#d4d4d4;"></div>
<div class="r" style="left:1270px;top:247px;width:1px;height:23px;background:#c4c4c4;"></div>
<div class="t" style="left:1191.00px;width:80px;text-align:center;top:251.96px;font-size:16px;color:#222;">J</div>
<div class="r" style="left:1350px;top:271px;width:1px;height:692px;background:#d4d4d4;"></div>
<div class="r" style="left:1350px;top:247px;width:1px;height:23px;background:#c4c4c4;"></div>
<div class="t" style="left:1271.00px;width:80px;text-align:center;top:251.96px;font-size:16px;color:#222;">K</div>
<div class="r" style="left:1430px;top:271px;width:1px;height:692px;background:#d4d4d4;"></div>
<div class="r" style="left:1430px;top:247px;width:1px;height:23px;background:#c4c4c4;"></div>
<div class="t" style="left:1351.00px;width:80px;text-align:center;top:251.96px;font-size:16px;color:#222;">L</div>
<div class="r" style="left:1510px;top:271px;width:1px;height:692px;background:#d4d4d4;"></div>
<div class="r" style="left:1510px;top:247px;width:1px;height:23px;background:#c4c4c4;"></div>
<div class="t" style="left:1431.00px;width:80px;text-align:center;top:251.96px;font-size:16px;color:#222;">M</div>
<div class="r" style="left:1590px;top:271px;width:1px;height:692px;background:#d4d4d4;"></div>
<div class="r" style="left:1590px;top:247px;width:1px;height:23px;background:#c4c4c4;"></div>
<div class="t" style="left:1511.00px;width:80px;text-align:center;top:251.96px;font-size:16px;color:#222;">N</div>
<div class="r" style="left:1670px;top:271px;width:1px;height:692px;background:#d4d4d4;"></div>
<div class="r" style="left:1670px;top:247px;width:1px;height:23px;background:#c4c4c4;"></div>
<div class="t" style="left:1591.00px;width:80px;text-align:center;top:251.96px;font-size:16px;color:#222;">O</div>
<div class="r" style="left:1750px;top:271px;width:1px;height:692px;background:#d4d4d4;"></div>
<div class="r" style="left:1750px;top:247px;width:1px;height:23px;background:#c4c4c4;"></div>
<div class="t" style="left:1671.00px;width:80px;text-align:center;top:251.96px;font-size:16px;color:#222;">P</div>
<div class="r" style="left:1830px;top:271px;width:1px;height:692px;background:#d4d4d4;"></div>
<div class="r" style="left:1830px;top:247px;width:1px;height:23px;background:#c4c4c4;"></div>
<div class="t" style="left:1751.00px;width:80px;text-align:center;top:251.96px;font-size:16px;color:#222;">Q</div>
<div class="t" style="left:1831.00px;width:80px;text-align:center;top:251.96px;font-size:16px;color:#222;">R</div>
<div class="r" style="left:33px;top:294px;width:1861px;height:1px;background:#d4d4d4;"></div>
<div class="r" style="left:0px;top:294px;width:33px;height:1px;background:#c4c4c4;"></div>
<div class="t" style="left:0.00px;width:34px;text-align:center;top:275.96px;font-size:16px;color:#222;">1</div>
<div class="t" style="left:37.00px;top:275.96px;font-size:16px;color:#000;">Order Id,Category,Amount,Unitys,zone,Status</div>
<div class="r" style="left:33px;top:318px;width:1861px;height:1px;background:#d4d4d4;"></div>
<div class="r" style="left:0px;top:318px;width:33px;height:1px;background:#c4c4c4;"></div>
<div class="t" style="left:0.00px;width:34px;text-align:center;top:299.96px;font-size:16px;color:#222;">2</div>
<div class="t" style="left:37.00px;top:299.96px;font-size:16px;color:#000;">ITM-94KUQ,Stationery,4234,51,North,Archived</div>
<div class="r" style="left:33px;top:342px;width:1861px;height:1px;background:#d4d4d4;"></div>
<div class="r" style="left:0px;top:342px;width:33px;height:1px;background:#c4c4c4;"></div>
<div class="t" style="left:0.00px;width:34px;text-align:center;top:323.96px;font-size:16px;color:#222;">3</div>
<div class="t" style="left:37.00px;top:323.96px;font-size:16px;color:#000;">ITM-1AA1V,Clothing,2212,109,Central,Pending</div>
<div class="r" style="left:33px;top:366px;width:1861px;height:1px;background:#d4d4d4;"></div>
<div class="r" style="left:0px;top:366px;width:33px;height:1px;background:#c4c4c4;"></div>
<div class="t" style="left:0.00px;width:34px;text-align:center;top:347.96px;font-size:16px;color:#222;">4</div>
<div class="t" style="left:37.00px;top:347.96px;font-size:16px;color:#000;">ITM-2CISN,Electronics,4409,177,South,Processing</div>
<div class="r" style="left:33px;top:390px;width:1861px;height:1px;background:#d4d4d4;"></div>
<div class="r" style="left:0px;top:390px;width:33px;height:1px;background:#c4c4c4;"></div>
<div class="t" style="left:0.00px;width:34px;text-align:center;top:371.96px;font-size:16px;color:#222;">5</div>
<div class="t" style="left:37.00px;top:371.96px;font-size:16px;color:#000;">ITM-MWHZC,Stationery,2201,95,South,Pending</div>
<div class="r" style="left:33px;top:414px;width:1861px;height:1px;background:#d4d4d4;"></div>
<div class="r" style="left:0px;top:414px;width:33px;height:1px;background:#c4c4c4;"></div>
<div class="t" style="left:0.00px;width:34px;text-align:center;top:395.96px;font-size:16px;color:#222;">6</div>
<div class="t" style="left:37.00px;top:395.96px;font-size:16px;color:#000;">ITM-5PCXN,Grocery,2967,95,East,Archived</div>
<div class="r" style="left:33px;top:438px;width:1861px;height:1px;background:#d4d4d4;"></div>
<div class="r" style="left:0px;top:438px;width:33px;height:1px;background:#c4c4c4;"></div>
<div class="t" style="left:0.00px;width:34px;text-align:center;top:419.96px;font-size:16px;color:#222;">7</div>
<div class="t" style="left:37.00px;top:419.96px;font-size:16px;color:#000;">ITM-NVCFK,Electronics,241,2,North,Active</div>
<div class="r" style="left:33px;top:462px;width:1861px;height:1px;background:#d4d4d4;"></div>
<div class="r" style="left:0px;top:462px;width:33px;height:1px;background:#c4c4c4;"></div>
<div class="t" style="left:0.00px;width:34px;text-align:center;top:443.96px;font-size:16px;color:#222;">8</div>
<div class="t" style="left:37.00px;top:443.96px;font-size:16px;color:#000;">ITM-BFZ0F,Electronics,3974,142,North,Pending</div>
<div class="r" style="left:33px;top:486px;width:1861px;height:1px;background:#d4d4d4;"></div>
<div class="r" style="left:0px;top:486px;width:33px;height:1px;background:#c4c4c4;"></div>
<div class="t" style="left:0.00px;width:34px;text-align:center;top:467.96px;font-size:16px;color:#222;">9</div>
<div class="t" style="left:37.00px;top:467.96px;font-size:16px;color:#000;">ITM-NA5E5,Stationery,4091,153,Central,Processing</div>
<div class="r" style="left:33px;top:510px;width:1861px;height:1px;background:#d4d4d4;"></div>
<div class="r" style="left:0px;top:510px;width:33px;height:1px;background:#c4c4c4;"></div>
<div class="t" style="left:0.00px;width:34px;text-align:center;top:491.96px;font-size:16px;color:#222;">10</div>
<div class="t" style="left:37.00px;top:491.96px;font-size:16px;color:#000;">ITM-R8LRA,Sports,4085,161,East,Archived</div>
<div class="r" style="left:33px;top:534px;width:1861px;height:1px;background:#d4d4d4;"></div>
<div class="r" style="left:0px;top:534px;width:33px;height:1px;background:#c4c4c4;"></div>
<div class="t" style="left:0.00px;width:34px;text-align:center;top:515.96px;font-size:16px;color:#222;">11</div>
<div class="t" style="left:37.00px;top:515.96px;font-size:16px;color:#000;">ITM-YY51M,Stationery,4429,82,West,Processing</div>
<div class="r" style="left:33px;top:558px;width:1861px;height:1px;background:#d4d4d4;"></div>
<div class="r" style="left:0px;top:558px;width:33px;height:1px;background:#c4c4c4;"></div>
<div class="t" style="left:0.00px;width:34px;text-align:center;top:539.96px;font-size:16px;color:#222;">12</div>
<div class="t" style="left:37.00px;top:539.96px;font-size:16px;color:#000;">ITM-QLCNP,Clothing,4317,178,North,Processing</div>
<div class="r" style="left:33px;top:582px;width:1861px;height:1px;background:#d4d4d4;"></div>
<div class="r" style="left:0px;top:582px;width:33px;height:1px;background:#c4c4c4;"></div>
<div class="t" style="left:0.00px;width:34px;text-align:center;top:563.96px;font-size:16px;color:#222;">13</div>
<div class="t" style="left:37.00px;top:563.96px;font-size:16px;color:#000;">ITM-CJQ20,Stationery,2819,81,South,Pending</div>
<div class="r" style="left:33px;top:606px;width:1861px;height:1px;background:#d4d4d4;"></div>
<div class="r" style="left:0px;top:606px;width:33px;height:1px;background:#c4c4c4;"></div>
<div class="t" style="left:0.00px;width:34px;text-align:center;top:587.96px;font-size:16px;color:#222;">14</div>
<div class="t" style="left:37.00px;top:587.96px;font-size:16px;color:#000;">ITM-YREKK,Furniture,1125,135,West,Pending</div>
<div class="r" style="left:33px;top:630px;width:1861px;height:1px;background:#d4d4d4;"></div>
<div class="r" style="left:0px;top:630px;width:33px;height:1px;background:#c4c4c4;"></div>
<div class="t" style="left:0.00px;width:34px;text-align:center;top:611.96px;font-size:16px;color:#222;">15</div>
<div class="t" style="left:37.00px;top:611.96px;font-size:16px;color:#000;">ITM-KI1AU,Clothing,3710,148,Central,Archived</div>
<div class="r" style="left:33px;top:654px;width:1861px;height:1px;background:#d4d4d4;"></div>
<div class="r" style="left:0px;top:654px;width:33px;height:1px;background:#c4c4c4;"></div>
<div class="t" style="left:0.00px;width:34px;text-align:center;top:635.96px;font-size:16px;color:#222;">16</div>
<div class="t" style="left:37.00px;top:635.96px;font-size:16px;color:#000;">ITM-EG3YA,Electronics,1491,66,East,Archived</div>
<div class="r" style="left:33px;top:678px;width:1861px;height:1px;background:#d4d4d4;"></div>
<div class="r" style="left:0px;top:678px;width:33px;height:1px;background:#c4c4c4;"></div>
<div class="t" style="left:0.00px;width:34px;text-align:center;top:659.96px;font-size:16px;color:#222;">17</div>
<div class="t" style="left:37.00px;top:659.96px;font-size:16px;color:#000;">ITM-DU6IP,Clothing,29,66,West,Active</div>
<div class="r" style="left:33px;top:702px;width:1861px;height:1px;background:#d4d4d4;"></div>
<div class="r" style="left:0px;top:702px;width:33px;height:1px;background:#c4c4c4;"></div>
<div class="t" style="left:0.00px;width:34px;text-align:center;top:683.96px;font-size:16px;color:#222;">18</div>
<div class="t" style="left:37.00px;top:683.96px;font-size:16px;color:#000;">ITM-FBDMG,Stationery,1961,143,Central,Pending</div>
<div class="r" style="left:33px;top:726px;width:1861px;height:1px;background:#d4d4d4;"></div>
<div class="r" style="left:0px;top:726px;width:33px;height:1px;background:#c4c4c4;"></div>
<div class="t" style="left:0.00px;width:34px;text-align:center;top:707.96px;font-size:16px;color:#222;">19</div>
<div class="t" style="left:37.00px;top:707.96px;font-size:16px;color:#000;">ITM-E8M2F,Sports,293,6,Central,Processing</div>
<div class="r" style="left:33px;top:750px;width:1861px;height:1px;background:#d4d4d4;"></div>
<div class="r" style="left:0px;top:750px;width:33px;height:1px;background:#c4c4c4;"></div>
<div class="t" style="left:0.00px;width:34px;text-align:center;top:731.96px;font-size:16px;color:#222;">20</div>
<div class="t" style="left:37.00px;top:731.96px;font-size:16px;color:#000;">ITM-0CYT1,Sports,785,9,South,Active</div>
<div class="r" style="left:33px;top:774px;width:1861px;height:1px;background:#d4d4d4;"></div>
<div class="r" style="left:0px;top:774px;width:33px;height:1px;background:#c4c4c4;"></div>
<div class="t" style="left:0.00px;width:34px;text-align:center;top:755.96px;font-size:16px;color:#222;">21</div>
<div class="t" style="left:37.00px;top:755.96px;font-size:16px;color:#000;">ITM-89X3G,Electronics,1718,163,South,Pending</div>
<div class="r" style="left:33px;top:798px;width:1861px;height:1px;background:#d4d4d4;"></div>
<div class="r" style="left:0px;top:798px;width:33px;height:1px;background:#c4c4c4;"></div>
<div class="t" style="left:0.00px;width:34px;text-align:center;top:779.96px;font-size:16px;color:#222;">22</div>
<div class="t" style="left:37.00px;top:779.96px;font-size:16px;color:#000;">ITM-XM5XW,Sports,2852,86,East,Processing</div>
<div class="r" style="left:33px;top:822px;width:1861px;height:1px;background:#d4d4d4;"></div>
<div class="r" style="left:0px;top:822px;width:33px;height:1px;background:#c4c4c4;"></div>
<div class="t" style="left:0.00px;width:34px;text-align:center;top:803.96px;font-size:16px;color:#222;">23</div>
<div class="t" style="left:37.00px;top:803.96px;font-size:16px;color:#000;">ITM-I2D4G,Sports,2478,115,East,Processing</div>
<div class="r" style="left:33px;top:846px;width:1861px;height:1px;background:#d4d4d4;"></div>
<div class="r" style="left:0px;top:846px;width:33px;height:1px;background:#c4c4c4;"></div>
<div class="t" style="left:0.00px;width:34px;text-align:center;top:827.96px;font-size:16px;color:#222;">24</div>
<div class="t" style="left:37.00px;top:827.96px;font-size:16px;color:#000;">ITM-ERCOF,Grocery,3719,159,Central,Processing</div>
<div class="r" style="left:33px;top:870px;width:1861px;height:1px;background:#d4d4d4;"></div>
<div class="r" style="left:0px;top:870px;width:33px;height:1px;background:#c4c4c4;"></div>
<div class="t" style="left:0.00px;width:34px;text-align:center;top:851.96px;font-size:16px;color:#222;">25</div>
<div class="t" style="left:37.00px;top:851.96px;font-size:16px;color:#000;">ITM-FDZ5L,Stationery,529,55,West,Processing</div>
<div class="r" style="left:33px;top:894px;width:1861px;height:1px;background:#d4d4d4;"></div>
<div class="r" style="left:0px;top:894px;width:33px;height:1px;background:#c4c4c4;"></div>
<div class="t" style="left:0.00px;width:34px;text-align:center;top:875.96px;font-size:16px;color:#222;">26</div>
<div class="t" style="left:37.00px;top:875.96px;font-size:16px;color:#000;">ITM-ARW56,Clothing,4905,200,Central,Processing</div>
<div class="r" style="left:33px;top:918px;width:1861px;height:1px;background:#d4d4d4;"></div>
<div class="r" style="left:0px;top:918px;width:33px;height:1px;background:#c4c4c4;"></div>
<div class="t" style="left:0.00px;width:34px;text-align:center;top:899.96px;font-size:16px;color:#222;">27</div>
<div class="t" style="left:37.00px;top:899.96px;font-size:16px;color:#000;">ITM-1WRI7,Sports,906,131,West,Archived</div>
<div class="r" style="left:33px;top:942px;width:1861px;height:1px;background:#d4d4d4;"></div>
<div class="r" style="left:0px;top:942px;width:33px;height:1px;background:#c4c4c4;"></div>
<div class="t" style="left:0.00px;width:34px;text-align:center;top:923.96px;font-size:16px;color:#222;">28</div>
<div class="t" style="left:37.00px;top:923.96px;font-size:16px;color:#000;">ITM-6N04P,Sports,690,200,North,Active</div>
<div class="t" style="left:0.00px;width:34px;text-align:center;top:947.96px;font-size:16px;color:#222;">29</div>
<div class="t" style="left:37.00px;top:947.96px;font-size:16px;color:#000;">ITM-M9MWD,Electronics,4742,87,East,Archived</div>
<div class="r" style="left:33px;top:247px;width:1px;height:716px;background:#bdbdbd;"></div>
<div class="r" style="left:0px;top:270px;width:1894px;height:1px;background:#9e9e9e;"></div>
<div class="r" style="left:1894px;top:270px;width:1px;height:693px;background:#a9a9a9;"></div>
<svg class="s" style="left:14px;top:251px;" width="17" height="17" viewBox="0 0 17 17"><polygon points="16,0 16,16 0,16" fill="#b4b4b4"/></svg>
<div class="r" style="left:1895px;top:247px;width:22px;height:716px;background:#e6e6e6;"></div>
<div class="r" style="left:1898px;top:268px;width:18px;height:677px;background:#dadada;"></div>
<div class="r" style="left:1898px;top:249px;width:18px;height:19px;background:#ffffff;box-sizing:border-box;border:1px solid #d4d4d4"></div>
<div class="r" style="left:1898px;top:268px;width:18px;height:62px;background:#ffffff;box-sizing:border-box;border:1px solid #ababab"></div>
<div class="r" style="left:1898px;top:945px;width:18px;height:19px;background:#ffffff;box-sizing:border-box;border:1px solid #d4d4d4"></div>
<div class="r" style="left:0px;top:963px;width:1917px;height:29px;background:#e6e6e6;"></div>
<div class="r" style="left:0px;top:963px;width:1895px;height:1px;background:#ababab;"></div>
<div class="r" style="left:103px;top:963px;width:158px;height:26px;background:#ffffff;"></div>
<div class="r" style="left:103px;top:985px;width:158px;height:3px;background:#217346;"></div>
<div class="t" style="left:102.50px;width:158px;text-align:center;top:965.81px;font-size:17px;color:#217346;font-weight:bold">Comma_Data (2)</div>
<div class="r" style="left:1186px;top:969px;width:692px;height:18px;background:#dadada;"></div>
<div class="r" style="left:1186px;top:969px;width:649px;height:18px;background:#ffffff;box-sizing:border-box;border:1px solid #ababab"></div>
<div class="r" style="left:0px;top:992px;width:1917px;height:26px;background:#f3f3f3;"></div>
<div class="t" style="left:7.50px;top:1000.12px;font-size:12.5px;color:#444;">Ready</div>
<div class="r" style="left:0px;top:992px;width:1917px;height:1px;background:#dadada;"></div>
<div class="r" style="left:1584px;top:993px;width:42px;height:25px;background:#c8c8c8;"></div>
<div class="t" style="left:1850.00px;width:60px;text-align:right;top:1000.62px;font-size:12.5px;color:#444;">100%</div>
<svg class="s" style="left:0px;top:963px;" width="420" height="29" viewBox="0 0 420 29"><polygon points="33.5,5.5 33.5,13.5 28,9.5" fill="#c4c4c4" transform="translate(0,4.5)"/><polygon points="57,10 57,18 62.5,14" fill="#b0b0b0"/><circle cx="303.6" cy="14.7" r="9.3" fill="none" stroke="#7a7a7a" stroke-width="1.1"/><path d="M298.5,14.7 H308.7 M303.6,9.6 V19.8" stroke="#6a6a6a" stroke-width="1.6"/></svg>
<div class="r" style="left:103px;top:963px;width:1px;height:25px;background:#d0d0d0;"></div>
<div class="r" style="left:260px;top:963px;width:1px;height:25px;background:#d0d0d0;"></div>
<div class="r" style="left:1878px;top:969px;width:19px;height:18px;background:#ffffff;box-sizing:border-box;border:1px solid #d4d4d4"></div>
<div class="r" style="left:1167px;top:969px;width:19px;height:18px;background:#ffffff;box-sizing:border-box;border:1px solid #d4d4d4"></div>
<svg class="s" style="left:1140px;top:963px;" width="777" height="29" viewBox="0 0 777 29"><rect x="9" y="8.5" width="2.8" height="2.8" fill="#a8a8a8"/><rect x="9" y="13.5" width="2.8" height="2.8" fill="#a8a8a8"/><rect x="9" y="18.5" width="2.8" height="2.8" fill="#a8a8a8"/><polygon points="38.5,10 38.5,18.5 33,14.25" fill="#666"/><polygon points="745,10 745,18.5 750.5,14.25" fill="#666"/></svg>
<svg class="s" style="left:1898px;top:249px;" width="18" height="19" viewBox="0 0 18 19"><polygon points="4.5,11.5 13.5,11.5 9,7" fill="#555"/></svg>
<svg class="s" style="left:1898px;top:945px;" width="18" height="19" viewBox="0 0 18 19"><polygon points="4.5,7.5 13.5,7.5 9,12" fill="#555"/></svg>
<svg class="s" style="left:1580px;top:992px;" width="337" height="26" viewBox="0 0 337 26"><g fill="none" stroke="#6a6a6a" stroke-width="1"><rect x="16.5" y="5.5" width="16" height="16"/><path d="M16.5,10.8 H32.5 M16.5,16.2 H32.5 M21.8,5.5 V21.5 M27.2,5.5 V21.5"/><rect x="58.5" y="5.5" width="16" height="16"/><path d="M61.5,8.5 H71.5 V18.5 H61.5 Z M63.5,11.5 H69.5 M63.5,13.5 H69.5 M63.5,15.5 H69.5"/><rect x="99.5" y="5.5" width="16" height="16"/><path d="M105.5,5.5 V13.5 H109.5 V5.5"/></g><rect x="135" y="13" width="9.5" height="2" fill="#555"/><rect x="148.5" y="13.5" width="125" height="1" fill="#a8a8a8"/><rect x="208" y="7" width="7.5" height="14" fill="#6a6a6a"/><path d="M278,14 H287.5 M282.75,9.25 V18.75" stroke="#555" stroke-width="2"/></svg>
<div class="r" style="left:582px;top:222px;width:755px;height:538px;box-sizing:border-box;border:1px solid #a0a0a0;border-radius:8px;background:#f0f0f0;box-shadow:0 36px 52px -14px rgba(0,0,0,0.27), 0 2px 18px rgba(0,0,0,0.11);overflow:hidden"><div style="position:absolute;left:0;top:0;right:0;height:38px;background:#f3f3f3"></div></div>
<div class="t" style="left:593.50px;top:235.00px;font-size:14.65px;color:#8c8c8c;">Convert Text to Columns Wizard - Step 1 of 3</div>
<div class="t" style="left:592.50px;top:272.13px;font-size:13.2px;color:#000;">The Text Wizard has determined that your data is Delimited.</div>
<div class="t" style="left:592.50px;top:300.03px;font-size:13.2px;color:#000;">If this is correct, choose Next, or choose the data type that best describes your data.</div>
<div class="r" style="left:592px;top:333px;width:734px;height:92px;background:transparent;box-sizing:border-box;border:1px solid #dcdcdc"></div>
<div class="r" style="left:598px;top:328px;width:112px;height:12px;background:#f0f0f0;"></div>
<div class="t" style="left:601.70px;top:328.43px;font-size:13.2px;color:#000;">Original data type</div>
<div class="t" style="left:607.00px;top:353.83px;font-size:13.2px;color:#000;">Choose the file type that best describes your data:</div>
<div class="t" style="left:651.50px;top:377.03px;font-size:13.2px;color:#000;">Delimited</div>
<div class="t" style="left:651.50px;top:401.93px;font-size:13.2px;color:#000;">Fixed width</div>
<div class="t" style="left:735.70px;top:377.03px;font-size:13.2px;color:#000;">- Characters such as commas or tabs separate each field.</div>
<div class="t" style="left:735.70px;top:401.93px;font-size:13.2px;color:#000;">- Fields are aligned in columns with spaces between each field.</div>
<div class="t" style="left:606.30px;top:544.43px;font-size:13.2px;color:#000;">Preview of selected data:</div>
<div class="r" style="left:606px;top:571px;width:686px;height:104px;background:transparent;box-sizing:border-box;border-top:1px solid #000;border-left:1px solid #000;border-right:1px solid #000;border-bottom:1px solid #fff"></div>
<div class="r" style="left:630px;top:572px;width:1px;height:102px;background:#000;"></div>
<div class="r" style="left:607px;top:588px;width:23px;height:1px;background:#000;"></div>
<div class="t" style="left:610.50px;top:577.36px;font-size:12.8px;color:#111;font-family:'Liberation Mono',monospace">7</div>
<div class="r" style="left:607px;top:604px;width:23px;height:1px;background:#000;"></div>
<div class="t" style="left:610.50px;top:593.36px;font-size:12.8px;color:#111;font-family:'Liberation Mono',monospace">8</div>
<div class="r" style="left:607px;top:620px;width:23px;height:1px;background:#000;"></div>
<div class="t" style="left:610.50px;top:609.36px;font-size:12.8px;color:#111;font-family:'Liberation Mono',monospace">9</div>
<div class="r" style="left:607px;top:636px;width:23px;height:1px;background:#000;"></div>
<div class="t" style="left:610.50px;top:625.36px;font-size:12.8px;color:#111;font-family:'Liberation Mono',monospace">10</div>
<div class="r" style="left:607px;top:652px;width:23px;height:1px;background:#000;"></div>
<div class="t" style="left:610.50px;top:641.36px;font-size:12.8px;color:#111;font-family:'Liberation Mono',monospace">11</div>
<div class="r" style="left:607px;top:668px;width:23px;height:1px;background:#000;"></div>
<div class="t" style="left:610.50px;top:657.36px;font-size:12.8px;color:#111;font-family:'Liberation Mono',monospace">12</div>
<div class="t" style="left:631.00px;top:576.98px;font-size:13.25px;color:#111;font-family:'Liberation Mono',monospace">ITM-NVCFK,Electronics,241,2,North,Active</div>
<div class="r" style="left:833px;top:720px;width:112px;height:29px;background:#fdfdfd;box-sizing:border-box;border:1px solid #d0d0d0;border-radius:4px"></div>
<div class="t" style="left:833.00px;width:112px;text-align:center;top:729.33px;font-size:13.2px;color:#000;">Cancel</div>
<div class="r" style="left:960px;top:720px;width:112px;height:29px;background:#fdfdfd;box-sizing:border-box;border:1px solid #d0d0d0;border-radius:4px"></div>
<div class="t" style="left:960.00px;width:112px;text-align:center;top:729.33px;font-size:13.2px;color:#999;">&lt; Back</div>
<div class="r" style="left:1087px;top:720px;width:112px;height:29px;background:#fdfdfd;box-sizing:border-box;border:2px solid #0067c0;border-radius:4px"></div>
<div class="t" style="left:1087.00px;width:112px;text-align:center;top:729.33px;font-size:13.2px;color:#000;">Next &gt;</div>
<div class="r" style="left:1214px;top:720px;width:112px;height:29px;background:#fdfdfd;box-sizing:border-box;border:1px solid #d0d0d0;border-radius:4px"></div>
<div class="t" style="left:1214.00px;width:112px;text-align:center;top:729.33px;font-size:13.2px;color:#000;">Finish</div>
<div class="t" style="left:1238.50px;width:20px;text-align:center;top:233.00px;font-size:15px;color:#777;">?</div>
<svg class="s" style="left:1298px;top:233px;" width="16" height="16" viewBox="0 0 16 16"><path d="M2,2 L14,14 M14,2 L2,14" stroke="#6a6a6a" stroke-width="1.2"/></svg>
<svg class="s" style="left:626px;top:370px;" width="24" height="50" viewBox="0 0 24 50"><circle cx="12" cy="11.8" r="8" fill="#005fb8"/><circle cx="12" cy="11.8" r="3.6" fill="#ffffff"/><circle cx="12" cy="37.5" r="7.6" fill="none" stroke="#5a5a5a" stroke-width="1"/></svg>
<div class="r" style="left:652px;top:389px;width:9px;height:1px;background:#000;"></div>
<div class="r" style="left:685px;top:414px;width:9px;height:1px;background:#000;"></div>
<div class="r" style="left:1124px;top:741px;width:10px;height:1px;background:#000;"></div>
<div class="r" style="left:1254px;top:741px;width:6px;height:1px;background:#000;"></div>
<svg class="s" style="left:1290px;top:570px;" width="30" height="125" viewBox="0 0 30 125"><polygon points="8,14.8 16.8,14.8 12.4,8" fill="#999"/><polygon points="8,91 16.8,91 12.4,98" fill="#999"/><polygon points="-12,111 -12,120 -5,115.5" fill="#999"/></svg>
<svg class="s" style="left:600px;top:670px;" width="30" height="30" viewBox="0 0 30 30"><polygon points="18.6,10.6 18.6,20 12,15.3" fill="#999"/></svg>
<div class="r" style="left:608px;top:362px;width:124px;height:39px;background:transparent;box-sizing:border-box;border:5px solid #e11d22"></div>
<svg class="s" style="left:1180px;top:740px;" width="190" height="150" viewBox="0 0 190 150"><line x1="170" y1="133" x2="32" y2="25" stroke="#e11d22" stroke-width="6"/><polygon points="15.5,11.8 43,17.7 26.5,35.4" fill="#e11d22"/></svg>
</body></html>
